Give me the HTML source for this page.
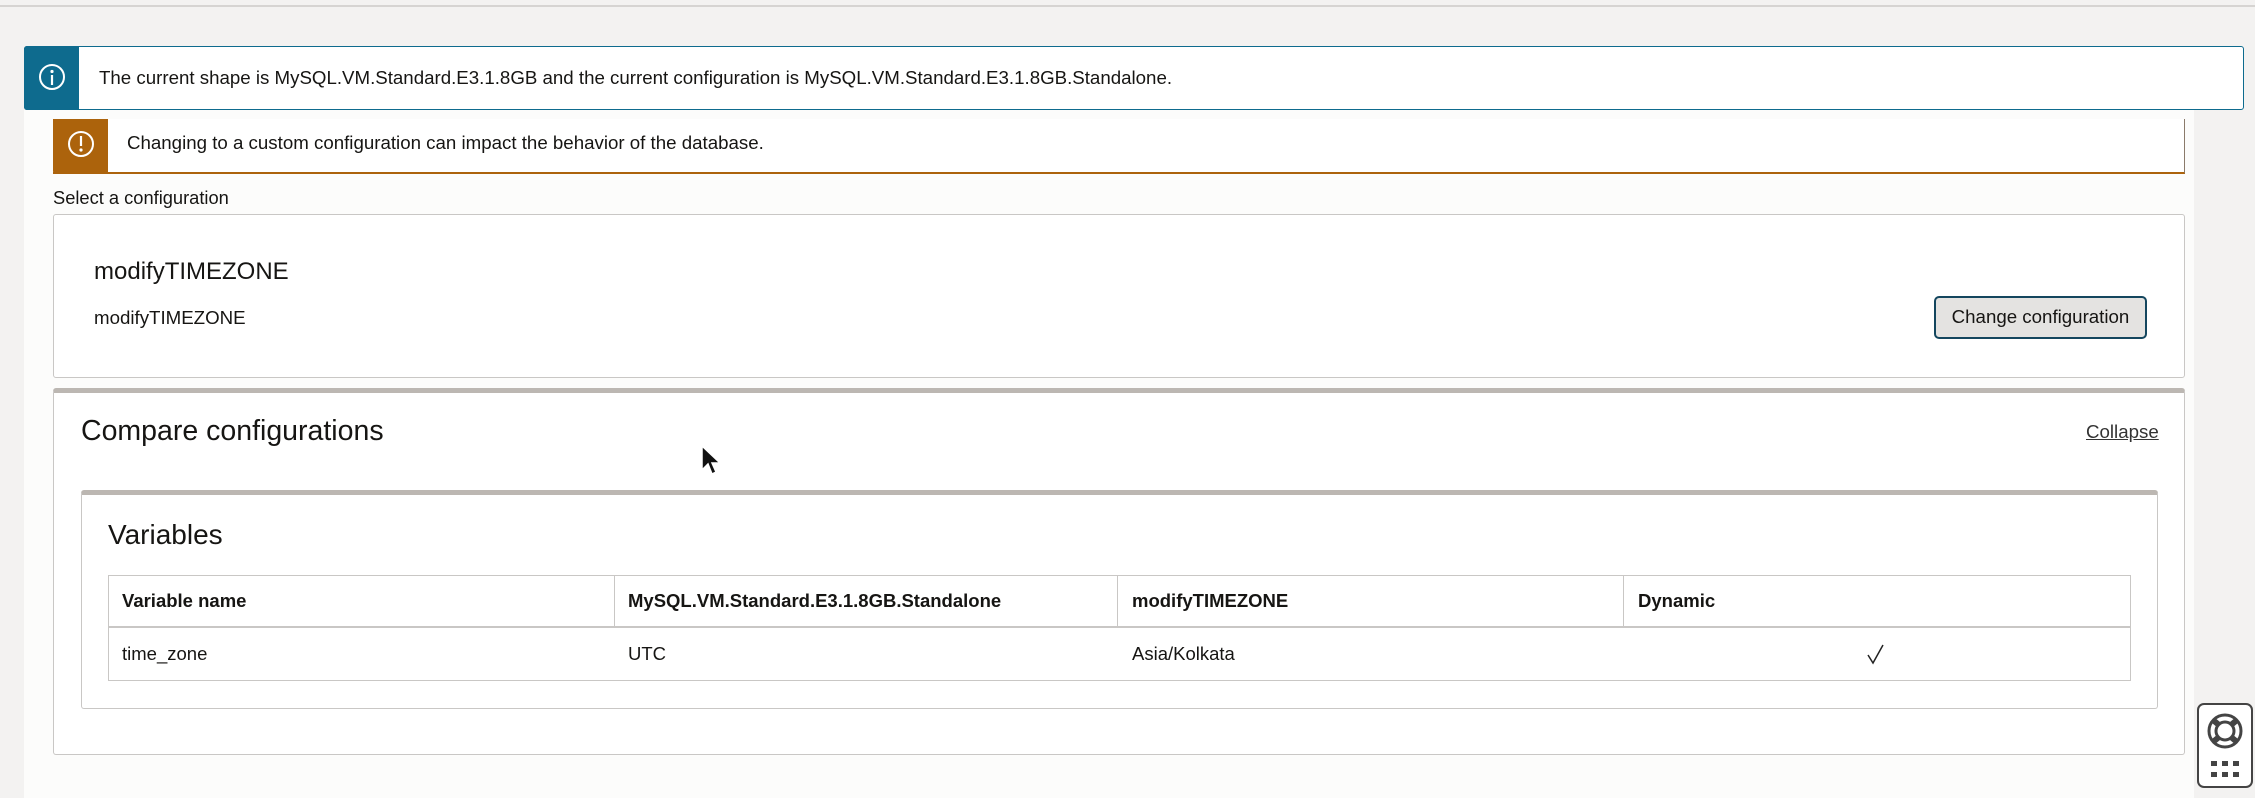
<!DOCTYPE html><html><head><style>
body{margin:0;width:2255px;height:798px;background:#f3f2f1;font-family:"Liberation Sans",sans-serif;color:#161513;position:relative;overflow:hidden}
.a{position:absolute;box-sizing:border-box}
</style></head><body>
<div class="a" style="left:0;top:5px;width:2255px;height:2px;background:#d6d4d2"></div>
<div class="a" style="left:24px;top:110px;width:2170px;height:688px;background:#fcfcfb"></div>
<div class="a" style="left:24px;top:46px;width:2220px;height:64px;background:#fff;border:1.5px solid #0e6b8e;border-radius:3px"></div>
<div class="a" style="left:24px;top:46px;width:55px;height:64px;background:#0e6b8e;border-radius:3px 0 0 3px"></div>
<svg class="a" style="left:38px;top:63px" width="28" height="28" viewBox="0 0 28 28"><circle cx="14" cy="14" r="12" fill="none" stroke="#fff" stroke-width="2"/><circle cx="14" cy="8.5" r="1.6" fill="#fff"/><rect x="12.9" y="12" width="2.2" height="10" fill="#fff"/></svg>
<div class="a" style="left:99px;top:67px;font-size:18.7px">The current shape is MySQL.VM.Standard.E3.1.8GB and the current configuration is MySQL.VM.Standard.E3.1.8GB.Standalone.</div>
<div class="a" style="left:53px;top:119px;width:2132px;height:55px;background:#fff;border-bottom:2px solid #ac630c;border-right:1px solid #8a7a6a"></div>
<div class="a" style="left:53px;top:119px;width:55px;height:55px;background:#ac630c;border-radius:0 0 0 3px"></div>
<svg class="a" style="left:67px;top:130px" width="28" height="28" viewBox="0 0 28 28"><circle cx="14" cy="14" r="12" fill="none" stroke="#fff" stroke-width="2"/><rect x="12.9" y="6" width="2.2" height="10" fill="#fff"/><circle cx="14" cy="20" r="1.6" fill="#fff"/></svg>
<div class="a" style="left:127px;top:132px;font-size:18.7px">Changing to a custom configuration can impact the behavior of the database.</div>
<div class="a" style="left:53px;top:187px;font-size:18.3px">Select a configuration</div>
<div class="a" style="left:53px;top:214px;width:2132px;height:164px;background:#fff;border:1px solid #c9c7c5;border-radius:3px"></div>
<div class="a" style="left:94px;top:258px;font-size:24px">modifyTIMEZONE</div>
<div class="a" style="left:94px;top:307px;font-size:18.7px">modifyTIMEZONE</div>
<div class="a" style="left:1934px;top:296px;width:213px;height:43px;background:#e4e3e1;border:2.5px solid #14465e;border-radius:5px;font-size:18.7px;text-align:center;line-height:38px">Change configuration</div>
<div class="a" style="left:53px;top:388px;width:2132px;height:367px;background:#fff;border:1px solid #c9c7c5;border-top:5px solid #bcb7b2;border-radius:3px"></div>
<div class="a" style="left:81px;top:415px;font-size:28.5px">Compare configurations</div>
<div class="a" style="left:2086px;top:421px;font-size:18.7px;text-decoration:underline;color:#333">Collapse</div>
<div class="a" style="left:81px;top:490px;width:2077px;height:219px;background:#fff;border:1px solid #c9c7c5;border-top:5px solid #bcb7b2;border-radius:3px"></div>
<div class="a" style="left:108px;top:519px;font-size:28px">Variables</div>
<div class="a" style="left:108px;top:575px;width:2023px;height:106px;border:1.5px solid #c9c7c5"></div>
<div class="a" style="left:108px;top:626px;width:2023px;height:2px;background:#c9c7c5"></div>
<div class="a" style="left:614px;top:575px;width:1px;height:52px;background:#c9c7c5"></div>
<div class="a" style="left:1117px;top:575px;width:1px;height:52px;background:#c9c7c5"></div>
<div class="a" style="left:1623px;top:575px;width:1px;height:52px;background:#c9c7c5"></div>
<div class="a" style="left:122px;top:590px;font-size:18.5px;font-weight:bold">Variable name</div>
<div class="a" style="left:628px;top:590px;font-size:18.5px;font-weight:bold">MySQL.VM.Standard.E3.1.8GB.Standalone</div>
<div class="a" style="left:1132px;top:590px;font-size:18.5px;font-weight:bold">modifyTIMEZONE</div>
<div class="a" style="left:1638px;top:590px;font-size:18.5px;font-weight:bold">Dynamic</div>
<div class="a" style="left:122px;top:643px;font-size:18.5px">time_zone</div>
<div class="a" style="left:628px;top:643px;font-size:18.5px">UTC</div>
<div class="a" style="left:1132px;top:643px;font-size:18.5px">Asia/Kolkata</div>
<svg class="a" style="left:1866px;top:643px" width="20" height="22" viewBox="0 0 20 22"><path d="M2 12 L7 20 L17 2" fill="none" stroke="#222" stroke-width="1.5"/></svg>
<svg class="a" style="left:700px;top:444px" width="22" height="32" viewBox="0 0 22 32"><path d="M2 2 L2 26 L8 20 L12 30 L16 28 L12 19 L20 19 Z" fill="#111" stroke="#fff" stroke-width="1.5"/></svg>
<div class="a" style="left:2197px;top:703px;width:56px;height:85px;background:#fff;border:2px solid #444;border-radius:7px"></div>
<svg class="a" style="left:2205px;top:711px" width="40" height="40" viewBox="0 0 40 40"><circle cx="20" cy="20" r="16" fill="none" stroke="#444" stroke-width="3"/><circle cx="20" cy="20" r="9" fill="none" stroke="#444" stroke-width="3"/><path d="M8 9 L14 14 M32 9 L26 14 M8 31 L14 26 M32 31 L26 26" stroke="#444" stroke-width="6"/></svg>
<svg class="a" style="left:2211px;top:761px" width="30" height="18"><g fill="#444"><rect x="0" y="0" width="6" height="5"/><rect x="11" y="0" width="6" height="5"/><rect x="22" y="0" width="6" height="5"/><rect x="0" y="11" width="6" height="5"/><rect x="11" y="11" width="6" height="5"/><rect x="22" y="11" width="6" height="5"/></g></svg>
</body></html>
